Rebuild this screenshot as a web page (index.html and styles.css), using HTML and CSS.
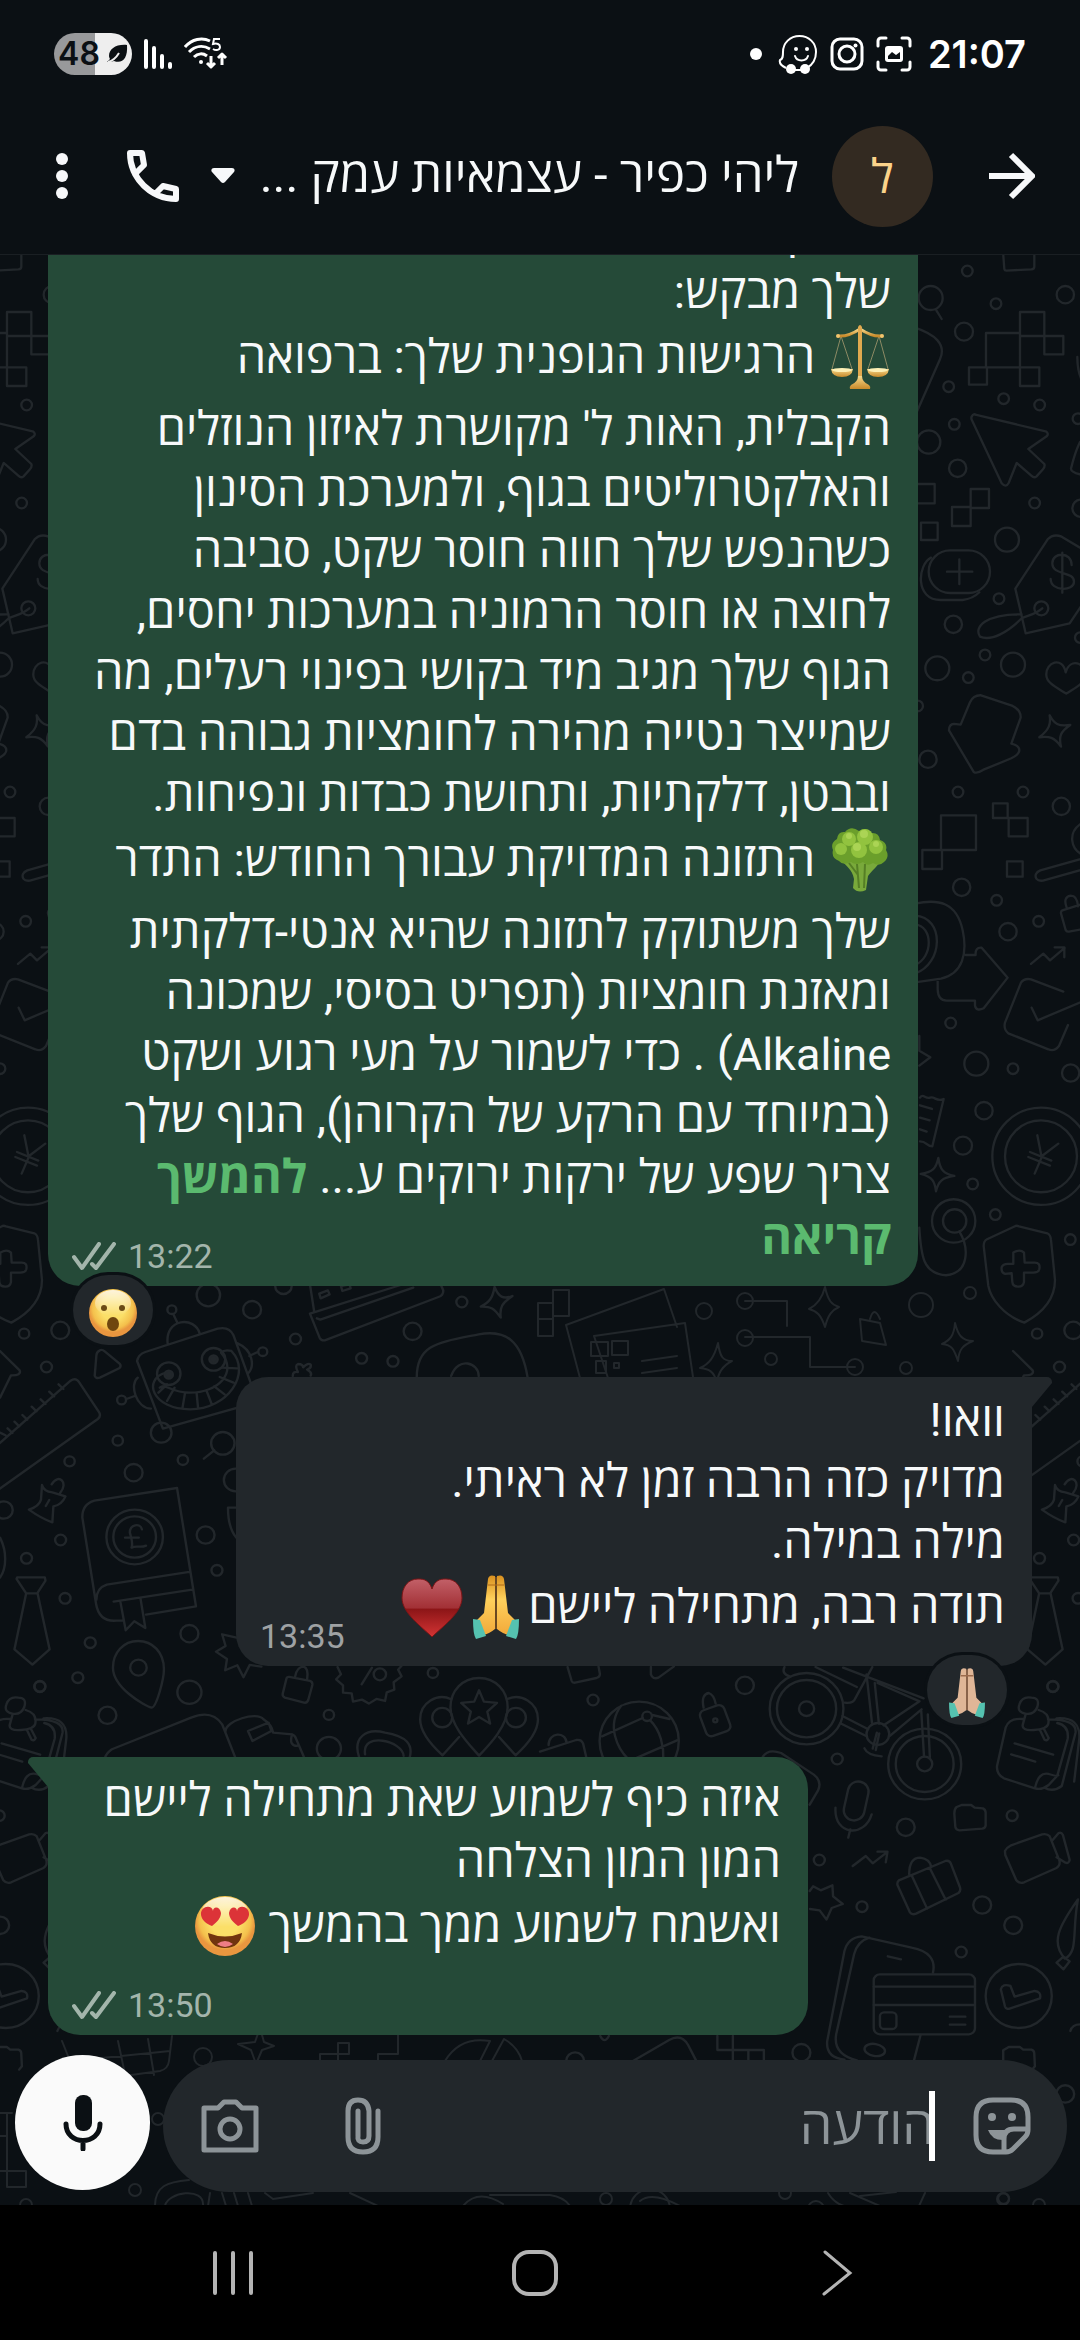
FILE: index.html
```html
<!DOCTYPE html>
<html lang="he" dir="rtl">
<head>
<meta charset="utf-8">
<meta name="viewport" content="width=device-width, initial-scale=1">
<title>ליהי כפיר - עצמאיות עמק</title>
<link rel="stylesheet" href="styles.css">
</head>
<body>
<div class="screen">
  <div class="status">
    <div class="status-group">
      <span class="clock">21:07</span>
      <svg class="status-icon" width="36" height="36" viewBox="0 0 36 36" fill="none" stroke="#fff" stroke-width="3" stroke-linecap="round"><path d="M2 10V5a3 3 0 0 1 3-3h5M26 2h5a3 3 0 0 1 3 3v5M34 26v5a3 3 0 0 1-3 3h-5M10 34H5a3 3 0 0 1-3-3v-5"/><rect x="9" y="10" width="18" height="16" rx="3" fill="#fff" stroke="none"/><path d="M12 23v-3l4-4 4 3 4-3v7z" fill="#0b1014" stroke="none"/></svg>
      <svg class="status-icon" width="34" height="34" viewBox="0 0 34 34" fill="none" stroke="#fff" stroke-width="3"><rect x="2" y="2" width="30" height="30" rx="8"/><circle cx="17" cy="17" r="8"/><circle cx="25.500" cy="8.500" r="2" fill="#fff" stroke="none"/></svg>
      <svg class="status-icon" width="40" height="40" viewBox="0 0 40 40" fill="none" stroke="#fff" stroke-width="2"><path d="M8 34C4 32 1 29 2 26c3-1 3-4 3-8C5 9 12 2 21.500 2S38 9 38 18c0 7-4 13-9 16M16 36h10"/><circle cx="13" cy="35" r="5" fill="#fff" stroke="none"/><circle cx="27" cy="35" r="5" fill="#fff" stroke="none"/><circle cx="18" cy="15" r="2" fill="#fff" stroke="none"/><circle cx="29" cy="15" r="2" fill="#fff" stroke="none"/><path d="M17 22c2 6 11 6 13 0" stroke-linecap="round"/></svg>
      <span class="dot"></span>
    </div>
    <div class="status-group">
      <svg width="44" height="34" viewBox="0 0 44 34" fill="none" stroke="#fff" stroke-width="3"><path d="M1 10C8 2 18 0 26 4M5 15c6-6 14-7 21-3M10 20c4-4 9-4 13-1" /><circle cx="17" cy="25" r="2" fill="#fff" stroke="none"/><path d="M27 19v11M23 26l4 4 4-4M38 28V17M34 21l4-4 4 4" stroke-linejoin="round"/><path d="M36 2h-6l-1 5c4-1 7 0 7 3s-4 4-7 2" stroke-width="2"/></svg>
      <svg width="28" height="32" viewBox="0 0 28 32" stroke="#fff" stroke-width="4" stroke-linecap="round"><path d="M2 3v26M10 10v19M18 18v11M26 26v3"/></svg>
      <span class="battery"><span>48</span><svg width="22" height="20" viewBox="0 0 22 20"><path d="M21 1C10 0 3 5 3 12c0 1 1 3 1 3L1 18c4 0 6-1 7-1 8 3 14-2 13-16z" fill="#0b1014"/><path d="M2 18c4-1 8-4 11-9" stroke="#eee" stroke-width="2" fill="none"/></svg></span>
    </div>
  </div>

  <header class="bar">
    <button class="icon-button" aria-label="חזרה"><svg width="46" height="48" viewBox="0 0 46 48" fill="none" stroke="#f7f8fa" stroke-width="6"><path d="M0 24h42M22 3l21 21-21 21"/></svg></button>
    <span class="avatar">ל</span>
    <h1 class="title">ליהי כפיר - עצמאיות עמק ...</h1>
    <button class="icon-button caret-button" aria-label="אפשרויות שיחה"><svg width="24" height="16" viewBox="0 0 24 16"><path d="M3 0h18c3 0 3 3 2 4l-9 10q-2 2-4 0L1 4C0 3 0 0 3 0z" fill="#f7f8fa"/></svg></button>
    <button class="icon-button call-button" aria-label="שיחה"><svg width="52" height="52" viewBox="0 0 52 52" fill="none" stroke="#f7f8fa" stroke-width="6" stroke-linejoin="round"><path d="M3 3h12l2 12-9 9c5 9 11 15 20 20l8-8 13 3v10C24 49 3 28 3 3z"/></svg></button>
    <button class="icon-button menu-button" aria-label="עוד"><svg width="12" height="48" viewBox="0 0 12 48" fill="#f7f8fa"><circle cx="6" cy="7" r="6"/><circle cx="6" cy="24" r="6"/><circle cx="6" cy="41" r="6"/></svg></button>
  </header>

  <div class="conversation">
    <svg class="wallpaper" viewBox="0 254 1080 1951" preserveAspectRatio="xMidYMin slice" fill="none" stroke="#22272b" stroke-width="7" stroke-linejoin="round" stroke-linecap="round" aria-hidden="true">
      <defs>
        <g id="doodle-a" transform="translate(915 250) scale(.3333)">
          <path d="M265 14l3 40q1 5 6 5l75-4q9-1 9-8V14M64 178l16 26M0 230c60 20 95 50 75 95L0 495M213 246h102v103H213zM315 183h73v72h-73zM388 255h57v55h-57zM162 349h54v52h-54zM315 349h58v56h-58zM487 318c0 40 10 80 40 100"/>
          <circle cx="157" cy="60" r="16"/><circle cx="47" cy="141" r="36"/><circle cx="243" cy="158" r="16"/><circle cx="451" cy="131" r="26"/><circle cx="147" cy="242" r="27"/><circle cx="101" cy="407" r="16"/><circle cx="266" cy="443" r="16"/><circle cx="374" cy="462" r="16"/><circle cx="118" cy="520" r="16"/><circle cx="41" cy="573" r="35"/><circle cx="128" cy="652" r="26"/><circle cx="359" cy="756" r="16"/><circle cx="489" cy="503" r="16"/><circle cx="276" cy="866" r="36"/><circle cx="498" cy="772" r="26"/>
          <path d="M172 494q3-7 12-2l208 49q11 7 3 15l-55 38 48 45q3 8-4 16l-20 22q-7 5-15-3l-44-38-24 60q-8 15-21 1L172 510q-6-10 0-16zM0 699h59v58H0M167 714h55v57h-55zM111 768h56v57h-56zM18 815h50v52H18zM495 573q-15 30-27 80 0 10 27 17"/>
          <rect x="41" y="898" width="184" height="128" rx="64"/><path d="M96 962h76M133 925v74M48 920c-40 20-50 128 30 127h65q30-3 50-23M495 890l-55-33q-25-10-42 8l-97 148 31 134 132-30 40-60M320 1102c30-12 45-15 62-30M320 1102c-40 40-90 70-125 55-20-30 20-68 125-67"/>
          <path d="M470 942c0-40-58-40-58-5 0 38 65 22 65 55 0 30-70 30-70-8M442 905v120"/><circle cx="379" cy="1072" r="21"/><circle cx="252" cy="1043" r="16"/><circle cx="115" cy="1120" r="26"/><circle cx="210" cy="1212" r="16"/><circle cx="294" cy="1241" r="36"/><circle cx="67" cy="1252" r="36"/><circle cx="160" cy="1280" r="16"/><circle cx="496" cy="1160" r="16"/><circle cx="8" cy="1365" r="16"/><circle cx="39" cy="1525" r="26"/>
          <path d="M452 1264c-10-50-60-30-58 8 0 25 35 40 60 56 30-20 57-30 57-60 0-30-45-50-59-4zM404 1393c14 26 25 34 62 29-30 20-35 35-28 65-20-28-35-32-65-28 30-23 35-40 31-66zM176 1563l-74-125q0-18 15-19l20 2 28-67q10-22 33-21l95 32q25 13 24 35l-28 78q24 6 24 20 0 12-24 24l-85 35q-18 12-28 6z"/>
        </g>
        <g id="doodle-b" transform="translate(915 760) scale(.3333)">
          <circle cx="129" cy="93" r="16"/><circle cx="324" cy="93" r="16"/><circle cx="439" cy="136" r="26"/><circle cx="140" cy="379" r="26"/><circle cx="245" cy="418" r="16"/><circle cx="279" cy="512" r="26"/><circle cx="371" cy="481" r="16"/><circle cx="107" cy="786" r="16"/><circle cx="184" cy="908" r="36"/><circle cx="294" cy="923" r="16"/><circle cx="467" cy="936" r="26"/><circle cx="207" cy="1049" r="26"/><circle cx="144" cy="1154" r="27"/><circle cx="173" cy="1269" r="16"/><circle cx="241" cy="1361" r="16"/><circle cx="466" cy="1436" r="16"/>
          <path d="M78 163h105v104H78zM22 267h59v57H22zM234 127h44v44h-44zM281 171h57v55h-57zM276 301h47v46h-47zM540 282l-164 46q-20 9-12 25 6 8 20 6l156-44M495 190c-35 25-30 75 10 92"/>
          <path d="M0 428c70-15 125-5 143 80 15 70 0 130-65 145L0 664M0 464c90 5 85 145 0 174M0 490c55 5 55 100 0 122M152 582h30q-2-24 18-22l78 90-72 92q-22 10-26-8v-15H95q-26 0-27-34v-30M455 440q-12-32 12-36 20 0 22 32M500 430l-58 18q-5 2-4 9l14 50q4 6 10 5l43-8M348 609l37-31 20 20 44-37M419 559h29v30M445 692l-97-37q-20-4-30 10l-48 120q-5 20 10 32l120 48q18 8 32-10l27-63M350 740l18 38 130-55M13 825v44l33 20-33 25M15 1010c10-15 15 5 30 0s20 15 41 4l-34 142c-20 0-15-15-37-15M15 1033l36 11M15 1070l29 8M15 1105l20 7"/>
          <circle cx="378" cy="1186" r="146"/><circle cx="378" cy="1186" r="108"/><path d="M367 1123l13 66-21 49M430 1148l-50 38M345 1173l64 26M340 1188l65 26M70 1191c5 35 15 48 48 54-35 5-48 15-55 46-4-30-10-43-46-52 35-5 46-15 53-48z"/>
          <circle cx="116" cy="1380" r="65"/><circle cx="119" cy="1380" r="35"/><path d="M133 1411c30 50 30 125-40 132-70-5-75-60-80-143M300 1396q4-3 12 0l85 21q10 5 11 20l12 120c0 60-40 100-92 128-60-20-100-70-108-110l-14-120q0-15 10-20zM295 1475q20-12 32 0l2 30h30q18 0 14 20-3 10-18 10h-28v28q-3 15-18 14-16 0-17-14l-2-26-20 2q-12-4-10-20 4-10 18-10h17z"/>
        </g>
        <g id="doodle-c" transform="translate(0 1280) scale(.3444 .3333)">
          <circle cx="70" cy="158" r="15"/><circle cx="175" cy="148" r="26"/><circle cx="135" cy="258" r="16"/><circle cx="605" cy="42" r="34"/><circle cx="732" cy="86" r="26"/><circle cx="858" cy="174" r="16"/><circle cx="1198" cy="151" r="26"/><circle cx="1341" cy="63" r="16"/><circle cx="1050" cy="232" r="16"/><circle cx="1141" cy="241" r="16"/><circle cx="823" cy="15" r="24"/><circle cx="342" cy="479" r="15"/><circle cx="531" cy="537" r="15"/><circle cx="202" cy="541" r="15"/><circle cx="388" cy="575" r="26"/><circle cx="647" cy="487" r="34"/><circle cx="684" cy="597" r="34"/><circle cx="11" cy="687" r="26"/><circle cx="176" cy="777" r="16"/><circle cx="77" cy="832" r="16"/><circle cx="597" cy="762" r="26"/><circle cx="630" cy="868" r="16"/><circle cx="189" cy="952" r="16"/><circle cx="550" cy="1058" r="26"/><circle cx="262" cy="1085" r="16"/><circle cx="226" cy="1190" r="16"/><circle cx="550" cy="1234" r="35"/><circle cx="116" cy="1216" r="16"/><circle cx="312" cy="1303" r="26"/><circle cx="955" cy="1302" r="15"/><circle cx="1257" cy="1176" r="15"/><circle cx="955" cy="1403" r="35"/>
          <path d="M290 208q6-4 14 3l44 38q5 7-2 13l-56 28q-12 4-15-6l5-62q1-10 10-14zM0 210l57 58q6 16-25 15L0 350M-10 495l215-196q15-10 25 5l58 90q6 12-4 20L-10 630M0 455l16 8M22 442l14 14M42 422l14 14M65 402l14 14M92 377l14 14M118 355l14 14M143 332l14 14M170 310l14 14"/>
          <path d="M398 240q4-20 24-27l210-70q34-8 46 20l70 200-275 80zM487 190c-10-80 80-85 93-32M515 125l-12-26M690 187c45 20 50 70 30 90M724 225l24-12M400 290c-25 20-5 90 38 93M391 345l-24 9M482 275c-70 20-40 110 70 110 110 0 180-110 120-175q-20-5-30 5c50 60-10 120-90 120-60 0-70-30-88-15M460 335l25-25M485 360l22-40M530 380l7-43M575 380l-4-43M615 370l-15-40M652 340l-30-24M678 305l-40-17M688 262l-44-2"/>
          <circle cx="490" cy="278" r="34"/><circle cx="490" cy="281" r="12" fill="#22272b"/><circle cx="620" cy="235" r="34"/><circle cx="620" cy="235" r="12" fill="#22272b"/><circle cx="499" cy="86" r="13"/><circle cx="763" cy="212" r="13"/><circle cx="353" cy="357" r="13"/><circle cx="468" cy="455" r="30"/>
          <path d="M622 508l-30 25M900 10l12 80M900 98L1200 0M900 98l28 72q5 10 15 8l330-130q15-5 14-20L1275 0M920 112l10 4 270-96M927 38l25-10 5 12-26 12zM990 15l25-5 3 12-24 8zM850 285q0-15 15-12-10-20 0-24 15 0 15 10 15-15 22-8 3 10-10 15 15 8 10 18M1436 18c12 30 25 38 52 27-30 20-38 34-34 65-20-28-28-34-58-33 28-14 35-30 40-59zM1210 290c0-100 60-105 180-130 80-15 125 20 142 130M1310 285c20-60 80-40 80 0M150 610c20-35 50-5 25 25M122 612q5 20 30 22l38 12q-10 25-35 30l-3 48q-30-10-68-38 30-10 35-30zM133 675l10-18"/>
          <path d="M514 621l55 355-145 25M514 621l-240 38q-35 10-35 50l40 260c5 30 20 54 60 50h16M550 873l-240 38q-30 10-30 45M558 926l-228 36M350 965l15 83 25-27 32 20-14-88M686 680h-24q0 60 24 90"/><circle cx="391" cy="768" r="82"/><circle cx="391" cy="768" r="62"/><path d="M412 745c-5-20-35-15-35 10 5 20 10 30 5 45 15-8 25 2 42-6M363 770h40"/>
          <path d="M50 889h80l2 10-24 38H76l-28-43zM76 937l-34 168 52 46 50-46-35-168M0 770c20 40 20 90 0 120M687 1070l-42-10 10 35-28 17 32 22-5 34 35-15 18 36 18-37 34 5"/>
          <path d="M440 1280c-20-5-112-60-112-120 0-45 30-80 73-80s75 35 75 85c0 30-22 115-36 115z"/><circle cx="402" cy="1160" r="24"/>
          <path d="M832 1192q2-5 8-4l60 12q8 2 7 12l-12 45q-4 10-12 8l-56-15q-8-4-6-12zM857 1187q5-30 25-30 14 5 10 36M980 1158l10 22-14 15 20 18v22l25 2 4 25 26-6 20 12 22-14 25 6 5-26 22-8-2-22 23-18-10-20 10-12M1050 1210l30-50"/><circle cx="1103" cy="1180" r="18"/>
          <path d="M305 1430q5-15 20-25l230-95q60-25 90 20l42 110M655 1350c0-30 90-60 110-35 15 10 25 20 28 40l55 5q8 2 12 14l25 60M720 1350l60-25 8 25-55 30zM848 1360q-10 35 15 35M1043 1430c-20-60 20-90 75-75 60 10 85 35 70 80M1060 1420c-10-70 110-40 112 5"/>
          <path d="M1391 1424c-30-35-83-90-83-145 0-50 35-88 83-88s83 38 83 88c0 55-50 110-83 145zM1310 1255c-40-20-90 10-90 60 0 40 35 80 65 108l48-55M1472 1255c40-20 90 10 90 60 0 40-35 80-65 108l-48-55M1391 1228l14 34 38 4-28 26 8 36-32-20-32 20 8-36-28-26 38-4z"/><circle cx="1284" cy="1310" r="29"/><circle cx="1498" cy="1310" r="29"/>
        </g>
        <g id="doodle-d" transform="translate(540 1660) scale(.3444 .3333)">
          <circle cx="154" cy="117" r="16"/><circle cx="595" cy="73" r="26"/><circle cx="863" cy="294" r="16"/><circle cx="1062" cy="499" r="26"/><circle cx="811" cy="597" r="16"/><circle cx="1371" cy="464" r="16"/><circle cx="1489" cy="77" r="16"/><circle cx="935" cy="737" r="16"/><circle cx="1284" cy="732" r="26"/><circle cx="1374" cy="793" r="26"/><circle cx="1223" cy="873" r="16"/><circle cx="759" cy="1175" r="26"/><circle cx="102" cy="1200" r="26"/><circle cx="1525" cy="1299" r="26"/><circle cx="1346" cy="1613" r="16"/>
          <path d="M80 18l12 42q2 6 10 5l62-14q10-3 10-12l-4-22M322 18v22q5 16 22 10l45-34"/>
          <ellipse cx="288" cy="240" rx="115" ry="118"/><circle cx="311" cy="166" r="14"/><path d="M236 134c-45 60-10 130 20 160M320 178c30 30 40 80 38 115M180 226l118-55M326 162l50 12M282 290l116-52M25 252c0-40 50-40 52-8M0 272l105-35q15-3 20 10l10 45M475 140q-8-40 15-44 15 5 20 32"/>
          <rect x="472" y="138" width="74" height="82" rx="16" transform="rotate(-20 509 180)"/><circle cx="509" cy="178" r="6"/>
          <circle cx="774" cy="143" r="107"/><circle cx="774" cy="143" r="86"/><circle cx="774" cy="143" r="22"/><circle cx="1117" cy="309" r="106"/><circle cx="1117" cy="309" r="84"/><circle cx="1117" cy="309" r="22"/><path d="M878 165l75 40M872 187l75 38M948 40l16 146M972 66l12 122M980 66l122 55-104 72M1108 145l-92 80M880 20l234 92M1107 150l8 136M1126 160l6 128M800 18l120 60M965 18l-50 95q-5 15-30 12M710 18q-10 20 15 28"/><circle cx="981" cy="219" r="33"/><path d="M978 215l-12 48M942 262q8 20 50 24M985 217l-10 50"/>
          <path d="M1352 200q10-30 50-26M1352 200l-25 115q-2 25 20 37l90 30q20 6 40-10l25-28 30-110q5-40-30-48M1475 175q85 0 80 40l-40 160q-25 20-50 5M1500 172q70-5 66 60l-15 130M1378 247l112 34M1368 280l70 22M1437 382q10-50 40-43 25 8 28 4M1392 130q8-25 35-20 25 0 17 28-10 25-35 20-25-5-17-28zM1410 160l-8 30q-5 20 32 17 40-3 42-20 5-30-28-40M1452 208l13 28q8 5 12-5l-14-28"/>
          <path d="M645 291q15-30 55-15l95 65q25 20 12 48l-24 42M895 530l6-25M858 440c-5 85 85 90 105 20"/><rect x="888" y="361" width="60" height="118" rx="30" transform="rotate(12 918 420)"/>
          <path d="M908 615l38-30 20 22 40-32M980 572h29l-5 32M1210 438l14-6h28l10 8 24 2q7 3 8 12v40q-2 8-10 9l-66 5q-10-1-12-10l-3-40q0-14 7-20zM1350 570q5-10 18-17l90-33q15-3 22 6l28 72q4 16-10 24l-92 42q-14 5-23-6l-32-76zM1486 540l20-24q8-3 12 5l20 76q-3 12-12 8l-26-16M1042 658l135-58q12-3 16 8l26 70q4 12-4 18l-123 62q-12 5-18-4l-36-82q-2-8 4-14zM1072 640q0-50 32-50 28 4 32 28M1080 645l44 98M1132 622l46 94M783 690l10-14 22 12 34-15 2 33 28 23-32 12-15 35-20-28-28-4M1562 715c-55 80-80 130-38 178 40-20 20-80 38-178zM1500 905l20-18 18 14-18 24z"/>
          <path d="M884 870q10-40 50-44l145 34q75 15 62 75M884 870l-50 270q-5 50 50 56M912 880q10-40 45-50M912 880l-52 240q-10 60 60 78M1105 1122l-20 80M1010 886l38 9"/><rect x="969" y="940" width="294" height="180" rx="18"/><path d="M969 977h294M969 1032h294M1190 1067h45M1190 1091h45"/><rect x="987" y="1054" width="48" height="50" rx="12"/><ellipse cx="972" cy="1167" rx="30" ry="18" transform="rotate(10 972 1167)"/>
          <circle cx="1390" cy="1005" r="96"/><path d="M1338 985q5-18 28-10l12 32 58-17q20 2 16 22l-86 30q-12 5-16-6zM1540 1110q5-20 28-20M1345 1200v-32l16-10h32l10 8 24 0q8 3 8 10l2 40-8 10M270 1200l105-63q35-20 55 15l25 50M515 1125v42h45v-42M560 1167h90v35M560 1167v35M605 1167v35M175 1125q12 25 25 0"/>
        </g>
      </defs>
      <use href="#doodle-a"/><use href="#doodle-a" x="-1013"/>
      <use href="#doodle-b"/><use href="#doodle-b" x="-1013"/>
      <use href="#doodle-c"/><use href="#doodle-c" x="1013"/>
      <use href="#doodle-d"/><use href="#doodle-d" x="-1013"/>
      <g stroke-width="2">
        <path d="M553 1289h16v26h-16zM538 1302h15v33h-15zM538 1318h15M566 1324l98-36 13 38M566 1324l28 106M594 1335l91-13 8 54M594 1335l14 42M591 1341h17v14h-17zM612 1340h16v14h-16zM596 1360h10v12h-10zM614 1362h5v5h-5zM642 1360l35-5M642 1372l35-5M745 1300h42v25M745 1336h65v30h45M825 1286c3 14 7 18 14 20-7 3-11 8-14 20-4-12-8-16-16-18 8-4 13-10 16-22zM955 1322c3 12 7 18 18 18-10 4-14 8-15 20-4-12-6-16-16-17 8-4 12-8 13-21zM718 1342c2 14 5 18 14 18-8 4-14 10-15 22-3-12-8-14-17-15 9-4 14-10 18-25zM860 1318l20 4 6 22-24-4zM870 1318q4-14 10 0"/>
        <circle cx="745" cy="1300" r="8"/><circle cx="745" cy="1337" r="8"/><circle cx="855" cy="1366" r="8"/><circle cx="704" cy="1310" r="8"/><circle cx="921" cy="1304" r="12"/><circle cx="970" cy="1292" r="6"/><circle cx="771" cy="1358" r="6"/><circle cx="906" cy="1367" r="6"/>
        <path d="M62 2040l12 30q2 10 14 10l72-10q8-2 9-10l3-25M72 2060l98-10M118 2040l8 38M148 2038l6 36M238 2043l17-2 5-14 4 14 10 4-12 4-6 14-5-14zM320 2060v-7h18v-11h11v11h-11v7M378 2060v-7h20v-20M445 2060q15-25 45-20l-10 20M492 2060l12-22q14 8 18 22M0 2112h12M7 2112v74h19v-16H0M7 2135H0M7 2170h19M155 2205c0-20 12-24 34-26M165 2205c2-14 40-20 38 0M210 2192l-2 13M222 2192l4 13M234 2192l4 13M248 2192l4 13M265 2192l8 6 40-6M350 2192l28 13M463 2205q15-18 40-2M490 2194h60q14 2 20 11M828 2192q6 10 16 13M850 2192l30 13M925 2192l-6 13M640 2200q12-10 40 5M860 2195l36-4"/>
        <circle cx="203" cy="2056" r="9"/><circle cx="135" cy="2189" r="6"/><circle cx="158" cy="2118" r="6"/><circle cx="26" cy="2204" r="6"/><circle cx="606" cy="2198" r="6"/><circle cx="1003" cy="2198" r="6"/><circle cx="1039" cy="2204" r="6"/><circle cx="785" cy="2192" r="6"/><circle cx="816" cy="2208" r="8"/><circle cx="650" cy="2208" r="20"/>
      </g>
    </svg>

    <main class="messages">
      <article class="message message--out message--long">
        <p class="text">הדיוק<br>שלך מבקש:<br><svg class="emoji" role="img" aria-label="מאזניים" viewBox="0 0 64 64"><defs><linearGradient id="gold" x2="0" y2="1"><stop offset="0" stop-color="#f7d98b"/><stop offset="1" stop-color="#c88a2a"/></linearGradient></defs><path d="M14 11L5 44M14 11l11 33M52 11L41 44M52 11l9 33" stroke="#8c8a64" stroke-width="1"/><path d="M11 11q10 1 22-7 12 8 22 7" fill="none" stroke="url(#gold)" stroke-width="3"/><circle cx="11" cy="11" r="2" fill="#f2c46d"/><circle cx="55" cy="11" r="2" fill="#f2c46d"/><path d="M31 2q2-4 4 0v51h-4z" fill="#e0a94f"/><path d="M4 44h22q-1 8-11 8T4 44zM40 44h22q-1 8-11 8t-11-8z" fill="url(#gold)"/><ellipse cx="15" cy="45" rx="10" ry="2" fill="#fdf0b6"/><ellipse cx="51" cy="45" rx="10" ry="2" fill="#fdf0b6"/><path d="M31 51h4q0 6 7 9 2 2 1 4H23q-1-2 1-4 7-3 7-9z" fill="url(#gold)"/></svg> הרגישות הגופנית שלך: ברפואה<br>הקבלית, האות ל' מקושרת לאיזון הנוזלים<br>והאלקטרוליטים בגוף, ולמערכת הסינון<br>כשהנפש שלך חווה חוסר שקט, סביבה<br>לחוצה או חוסר הרמוניה במערכות יחסים,<br>הגוף שלך מגיב מיד בקושי בפינוי רעלים, מה<br>שמייצר נטייה מהירה לחומציות גבוהה בדם<br>ובבטן, דלקתיות, ותחושת כבדות ונפיחות.<br><svg class="emoji" role="img" aria-label="ברוקולי" viewBox="0 0 64 64"><path d="M14 32c6 7 11 9 13 19l-1 9q5 6 13 2l2-14c4-6 10-9 13-17l-7-3-6 7-3-8-8 2-6 5z" fill="#79a93b"/><path d="M30 36l2 24M38 36l-1 24M22 35l9 12" stroke="#557f25" stroke-width="2"/><path d="M32 3q7-5 12 2 8-1 9 7 8 3 6 10 4 7-2 12-5 5-11 1-6 4-10-1-7 4-12 0-8 4-12-1-8-3-6-11-3-7 4-11 1-8 8-7 6-7 14-1z" fill="#6b9f2b"/><g fill="#92c33f"><circle cx="22" cy="11" r="7"/><circle cx="38" cy="9" r="8"/><circle cx="49" cy="19" r="7"/><circle cx="14" cy="21" r="6"/><circle cx="32" cy="22" r="8"/></g><g fill="#abd455"><circle cx="22" cy="8" r="3"/><circle cx="37" cy="6" r="4"/><circle cx="30" cy="19" r="4"/><circle cx="49" cy="16" r="3"/></g></svg> התזונה המדויקת עבורך החודש: התדר<br>שלך משתוקק לתזונה שהיא אנטי-דלקתית<br>ומאזנת חומציות (תפריט בסיסי, שמכונה<br><span class="latin">Alkaline</span>) . כדי לשמור על מעי רגוע ושקט<br>(במיוחד עם הרקע של הקרוהן), הגוף שלך<br>צריך שפע של ירקות ירוקים ע... <a class="more" href="#more">להמשך<br>קריאה</a></p>
        <span class="meta"><time>13:22</time><svg width="44" height="29" viewBox="0 0 44 29" fill="none" stroke="currentColor" stroke-width="4" stroke-linecap="round" stroke-linejoin="round"><path d="M2 15l8 11L27 2M20 22l4 4L42 2"/></svg></span>
        <span class="reaction"><svg width="50" height="50" viewBox="0 0 50 50" role="img" aria-label="פרצוף מופתע"><defs><radialGradient id="face" cy=".4"><stop offset=".5" stop-color="#fbdf68"/><stop offset=".85" stop-color="#f4c04c"/><stop offset="1" stop-color="#e9963f"/></radialGradient><linearGradient id="shine" x2="0" y2="1"><stop offset="0" stop-color="#fff" stop-opacity=".8"/><stop offset="1" stop-color="#fff" stop-opacity="0"/></linearGradient></defs><circle cx="25" cy="25" r="24" fill="url(#face)"/><ellipse cx="25" cy="15" rx="18" ry="13" fill="url(#shine)"/><circle cx="16" cy="20" r="3" fill="#6b4b16"/><circle cx="34" cy="20" r="3" fill="#6b4b16"/><ellipse cx="25" cy="36" rx="6" ry="7" fill="#6f460f"/></svg></span>
      </article>

      <article class="message message--in">
        <p class="text">וואו!<br>מדויק כזה הרבה זמן לא ראיתי.<br>מילה במילה.<br>תודה רבה, מתחילה ליישם<svg class="emoji" role="img" aria-label="ידיים צמודות" viewBox="0 0 64 64"><defs><linearGradient id="hand" x2="0" y2="1"><stop offset="0" stop-color="#d9901f"/><stop offset=".4" stop-color="#ffd15c"/><stop offset="1" stop-color="#f2a93a"/></linearGradient></defs><path d="M31 1q-6-2-7 3l-4 34-9 9 8 13q6-1 12-6zM33 1q6-2 7 3l4 34 9 9-8 13q-6-1-12-6z" fill="url(#hand)"/><path d="M32 2v52M24 10h16" stroke="#b26a18" stroke-width="1"/><path d="M9 44l7 1 6 16-10 3Q9 60 9 44zM55 44l-7 1-6 16 10 3q3-4 3-20z" fill="#55c2b0"/></svg><svg class="emoji" role="img" aria-label="לב אדום" viewBox="0 0 64 64"><defs><linearGradient id="heart" x2="0" y2="1"><stop offset="0" stop-color="#c26068"/><stop offset=".5" stop-color="#a23035"/><stop offset=".52" stop-color="#8c1517"/><stop offset="1" stop-color="#d43434"/></linearGradient></defs><path d="M32 14C29 5 24 4 18 4 8 4 2 12 2 23c0 15 20 29 30 39 10-10 30-24 30-39C62 12 56 4 46 4c-6 0-11 1-14 10z" fill="url(#heart)" stroke="#7d1516" stroke-width="1"/></svg></p>
        <span class="meta"><time>13:35</time></span>
        <span class="reaction"><svg width="50" height="50" viewBox="0 0 64 64" role="img" aria-label="ידיים צמודות"><path d="M31 1q-6-2-7 3l-4 34-9 9 8 13q6-1 12-6zM33 1q6-2 7 3l4 34 9 9-8 13q-6-1-12-6z" fill="#dfb697"/><path d="M32 2v52M24 10h16" stroke="#9b6b4d" stroke-width="2"/><path d="M9 44l7 1 6 16-10 3Q9 60 9 44zM55 44l-7 1-6 16 10 3q3-4 3-20z" fill="#55c2b0"/></svg></span>
      </article>

      <article class="message message--out message--last">
        <p class="text">איזה כיף לשמוע שאת מתחילה ליישם<br>המון המון הצלחה<br>ואשמח לשמוע ממך בהמשך <svg class="emoji" role="img" aria-label="עיני לב" viewBox="0 0 64 64"><circle cx="32" cy="32" r="30" fill="url(#face)"/><ellipse cx="32" cy="18" rx="23" ry="15" fill="url(#shine)"/><path d="M20 17c-1-7-13-5-12 4 1 6 6 9 11 11 5-4 9-8 9-13-1-7-8-7-8-2zM44 17c1-7 13-5 12 4-1 6-6 9-11 11-5-4-9-8-9-13 1-7 8-7 8-2z" fill="#dc3338"/><path d="M15 39q17 7 34 0-2 15-17 15T15 39z" fill="#71340f"/><path d="M24 50q8-6 16 0-8 6-16 0z" fill="#ef7d86"/></svg></p>
        <span class="meta"><time>13:50</time><svg width="44" height="29" viewBox="0 0 44 29" fill="none" stroke="currentColor" stroke-width="4" stroke-linecap="round" stroke-linejoin="round"><path d="M2 15l8 11L27 2M20 22l4 4L42 2"/></svg></span>
      </article>
    </main>

    <form class="composer">
      <div class="field">
        <button type="button" class="icon-button" aria-label="מדבקות"><svg width="58" height="58" viewBox="0 0 58 58" fill="none" stroke="#8d9498" stroke-width="5" stroke-linejoin="round"><path d="M20 3h18q17 0 17 17v13q0 4-3 7L40 52q-3 3-7 3H20Q3 55 3 38V20Q3 3 20 3zM31 55V42q0-10 10-10h14"/><circle cx="19" cy="20" r="4" fill="#8d9498" stroke="none"/><circle cx="39" cy="20" r="4" fill="#8d9498" stroke="none"/><path d="M15 33h24q-6 3-7 10-13 1-17-10z" fill="#8d9498" stroke="none"/></svg></button>
        <span class="entry"><input type="text" placeholder="הודעה" aria-label="הודעה"><i class="caret"></i></span>
        <button type="button" class="icon-button" aria-label="צירוף קובץ"><svg width="36" height="58" viewBox="0 0 36 58" fill="none" stroke="#8d9498" stroke-width="5" stroke-linecap="round"><path d="M33 14v26q0 15-15 15T3 40V14Q3 3 13 3t11 11v25q0 6-6 6t-5-6V14"/></svg></button>
        <button type="button" class="icon-button camera-button" aria-label="מצלמה"><svg width="58" height="54" viewBox="0 0 58 54" fill="none" stroke="#8d9498" stroke-width="5" stroke-linejoin="round"><path d="M3 9h14l6-6h12l6 6h14v42H3z"/><circle cx="29" cy="30" r="10"/></svg></button>
      </div>
      <button type="button" class="mic" aria-label="הקלטה"><svg width="40" height="56" viewBox="0 0 40 56"><rect x="12" y="0" width="17" height="36" rx="8" fill="#0b1014"/><path d="M3 29c0 22 34 22 34 0M20 46v8" fill="none" stroke="#0b1014" stroke-width="5" stroke-linecap="round"/></svg></button>
    </form>
  </div>

  <nav class="system">
    <button class="icon-button" aria-label="אחורה"><svg width="44" height="46" viewBox="0 0 44 46" fill="none" stroke="#b4b4b4" stroke-width="3" stroke-linecap="round"><path d="M9 2l25 21L8 44"/></svg></button>
    <button class="icon-button" aria-label="בית"><svg width="46" height="46" viewBox="0 0 46 46" fill="none" stroke="#b4b4b4" stroke-width="4"><rect x="2" y="2" width="42" height="42" rx="15"/></svg></button>
    <button class="icon-button" aria-label="יישומים אחרונים"><svg width="42" height="44" viewBox="0 0 42 44" stroke="#b4b4b4" stroke-width="4" stroke-linecap="round"><path d="M3 2v40M21 2v40M39 2v40"/></svg></button>
  </nav>
</div>
</body>
</html>
```
FILE: styles.css
```css
* { box-sizing: border-box; }

body {
  margin: 0;
  background: #0b1014;
  color: #f7f9fa;
  font-family: Roboto, "Open Sans", "Noto Sans", sans-serif;
}

button {
  border: 0;
  padding: 0;
  background: none;
  color: inherit;
  font: inherit;
}

svg { display: block; flex: none; }

.screen {
  display: flex;
  flex-direction: column;
  height: 100vh;
  overflow: hidden;
}

/* phone status bar */
.status {
  display: flex;
  justify-content: space-between;
  align-items: center;
  height: 100px;
  padding: 8px 54px 0;
}

.status-group {
  display: flex;
  align-items: center;
  gap: 12px;
}

.clock {
  margin-left: 4px;
  color: #fff;
  font: 600 38px/44px Inter, sans-serif;
}

.dot {
  width: 12px;
  height: 12px;
  margin-right: 4px;
  border-radius: 50%;
  background: #fff;
}

.battery {
  display: flex;
  align-items: center;
  justify-content: center;
  gap: 6px;
  width: 78px;
  height: 42px;
  border-radius: 21px;
  direction: ltr;
  background: linear-gradient(to right, #98999b 53%, #eee 53%);
  color: #0b1014;
  font: 600 32px/42px Inter, sans-serif;
}

/* chat header */
.bar {
  display: flex;
  align-items: center;
  height: 155px;
  padding: 0 45px 2px 56px;
  border-bottom: 1px solid #1a1f23;
}

.avatar {
  width: 101px;
  height: 101px;
  margin: 0 56px 0 33px;
  border-radius: 50%;
  background: #332a21;
  color: #fbd38a;
  font-size: 47px;
  line-height: 101px;
  text-align: center;
}

.title {
  flex: 1;
  margin: 0;
  font-size: 49px;
  font-weight: 400;
  line-height: 80px;
  white-space: nowrap;
}

.call-button { margin-right: 32px; }
.menu-button { margin-right: 59px; }

/* conversation area */
.conversation {
  position: relative;
  display: flex;
  flex: 1;
  flex-direction: column;
  min-height: 0;
  overflow: hidden;
}

.wallpaper {
  position: absolute;
  inset: 0;
  width: 100%;
  height: 100%;
}

.messages {
  position: relative;
  display: flex;
  flex: 1;
  flex-direction: column;
  justify-content: flex-end;
  gap: 91px;
  min-height: 0;
  padding: 0 48px;
}

.message {
  position: relative;
  display: grid;
  max-width: 100%;
  padding: 12px 27px 18px 24px;
  border-radius: 32px;
  font-size: 47px;
  line-height: 61px;
}

.message--out {
  align-self: flex-end;
  width: 760px;
  background: #254a38;
}

.message--long { width: 870px; }

.message--in {
  align-self: flex-start;
  width: 796px;
  border-top-right-radius: 0;
  background: #22272b;
}

.message--last {
  border-top-left-radius: 0;
  row-gap: 26px;
}

.message--in::before,
.message--last::before {
  position: absolute;
  top: 0;
  width: 20px;
  height: 30px;
  background: inherit;
  content: "";
}

.message--in::before {
  left: 100%;
  border-top-right-radius: 5px;
  clip-path: polygon(0 0, 100% 0, 100% 20%, 0 100%);
}

.message--last::before {
  right: 100%;
  border-top-left-radius: 5px;
  clip-path: polygon(0 0, 100% 0, 100% 100%, 0 20%);
}

.text {
  grid-area: 1 / 1;
  margin: 0;
  white-space: nowrap;
}

.latin { font-size: 45px; }

.emoji {
  display: inline-block;
  width: 64px;
  height: 64px;
  margin: 3px 0 9px;
  vertical-align: -25px;
}

.more {
  color: #5bba6f;
  font-weight: 700;
  text-decoration: none;
}

.meta {
  grid-area: 1 / 1;
  display: flex;
  align-self: end;
  align-items: center;
  justify-self: end;
  gap: 12px;
  height: 24px;
  color: #9fa2a4;
  font-size: 34px;
  line-height: 24px;
}

.message--out .meta { color: #a3b5ab; }
.message--last .meta { grid-area: 2 / 1; }

.reaction {
  position: absolute;
  top: calc(100% - 11px);
  display: flex;
  align-items: center;
  justify-content: center;
  width: 80px;
  height: 70px;
  padding-top: 6px;
  border-radius: 35px;
  background: #22272b;
  box-shadow: 0 0 0 3px #0b1014;
}

.message--out .reaction { left: 25px; }
.message--in .reaction { right: 25px; }

/* message composer */
.composer {
  position: relative;
  display: flex;
  align-items: flex-end;
  gap: 13px;
  padding: 20px 13px 13px 15px;
}

.field {
  display: flex;
  flex: 1;
  align-items: center;
  gap: 38px;
  height: 132px;
  padding: 0 36px 0 38px;
  border-radius: 66px;
  background: #22272b;
}

.entry {
  position: relative;
  flex: 1;
}

.entry input {
  display: block;
  width: 100%;
  height: 70px;
  border: 0;
  padding: 0;
  outline: 0;
  background: none;
  color: #f7f9fa;
  font: inherit;
  font-size: 52px;
}

.entry input::placeholder {
  color: #8d9498;
  opacity: 1;
}

.caret {
  position: absolute;
  top: 0;
  right: 0;
  width: 6px;
  height: 70px;
  background: #fff;
}

.camera-button { margin-right: 48px; }

.mic {
  display: flex;
  align-items: center;
  justify-content: center;
  width: 135px;
  height: 135px;
  margin-bottom: 2px;
  border-radius: 50%;
  background: #fafafa;
}

/* system navigation */
.system {
  display: flex;
  align-items: center;
  justify-content: space-around;
  height: 135px;
  padding: 0 91px 0 83px;
  background: #000;
}
```
